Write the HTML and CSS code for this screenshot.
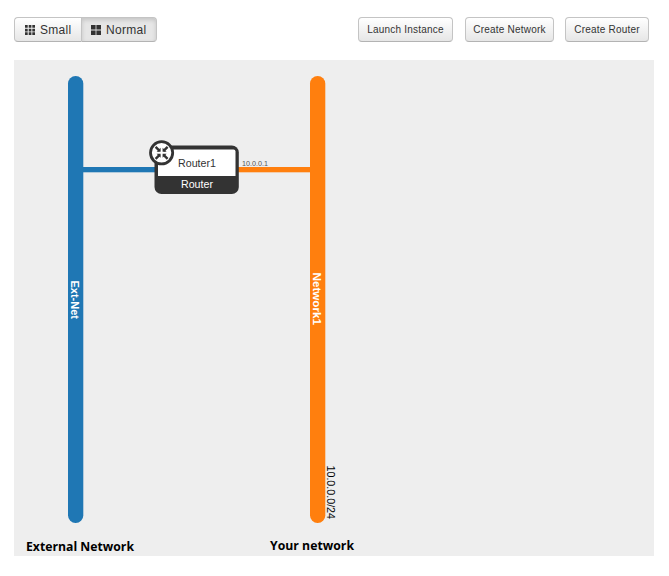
FILE: index.html
```
<!DOCTYPE html>
<html lang="en">
<head>
<meta charset="utf-8">
<title>Network Topology</title>
<link rel="stylesheet" href="styles.css">
</head>
<body>
<header class="toolbar">
  <div class="toggle">
    <button class="btn toggle-btn">
      <svg class="icon" width="10" height="10" viewBox="0 0 10 10"><path d="M0 0h2.7v2.7H0zM3.7 0h2.7v2.7H3.7zM7.3 0H10v2.7H7.3zM0 3.7h2.7v2.7H0zM3.7 3.7h2.7v2.7H3.7zM7.3 3.7H10v2.7H7.3zM0 7.3h2.7V10H0zM3.7 7.3h2.7V10H3.7zM7.3 7.3H10V10H7.3z"/></svg>
      <span>Small</span>
    </button>
    <button class="btn toggle-btn active">
      <svg class="icon" width="10" height="10" viewBox="0 0 10 10"><path d="M0 0h4.6v4.4H0zM5.4 0H10v4.4H5.4zM0 5.4h4.6V10H0zM5.4 5.4H10V10H5.4z"/></svg>
      <span>Normal</span>
    </button>
  </div>
  <div class="actions">
    <button class="btn launch">Launch Instance</button>
    <button class="btn network">Create Network</button>
    <button class="btn router">Create Router</button>
  </div>
</header>
<main class="canvas">
  <svg class="topology" width="640" height="496" viewBox="0 0 640 496">
    <rect class="ext" x="54" y="16" width="15.3" height="447" rx="7.6"/>
    <rect class="own" x="296" y="16" width="15.3" height="447" rx="7.6"/>
    <rect class="ext" x="68" y="107" width="75" height="5.3"/>
    <rect class="own" x="222" y="107" width="75" height="5.3"/>
    <text class="net-name" transform="translate(57 220.5) rotate(90)" textLength="38.5" lengthAdjust="spacingAndGlyphs">Ext-Net</text>
    <text class="net-name" transform="translate(299 212.5) rotate(90)" textLength="52.5" lengthAdjust="spacingAndGlyphs">Network1</text>
    <text class="cidr" transform="translate(313 405.5) rotate(90)" textLength="53.5" lengthAdjust="spacingAndGlyphs">10.0.0.0/24</text>
    <text class="ip" x="228" y="106" textLength="26" lengthAdjust="spacingAndGlyphs">10.0.0.1</text>
    <g class="device">
      <rect class="frame" x="140.5" y="85.5" width="84.3" height="48.5" rx="7"/>
      <path class="face" d="M144 89.5h75.5q2 0 2 2V116H144z"/>
      <text class="device-name" x="164" y="107" textLength="38" lengthAdjust="spacingAndGlyphs">Router1</text>
      <text class="device-type" x="167" y="128" textLength="32" lengthAdjust="spacingAndGlyphs">Router</text>
      <g transform="translate(147.6 92.8)">
        <circle class="badge" r="11.1"/>
        <path class="arrows" d="M-6-6L-2-2M6-6L2-2M-6 6L-2 2M6 6L2 2"/>
        <path class="heads" d="M-1-1v-4L-5-1zM1-1v-4L5-1zM-1 1v4L-5 1zM1 1v4L5 1z"/>
      </g>
    </g>
    <text class="caption" x="12" y="491" textLength="108" lengthAdjust="spacingAndGlyphs">External Network</text>
    <text class="caption" x="256" y="490" textLength="84" lengthAdjust="spacingAndGlyphs">Your network</text>
  </svg>
</main>
</body>
</html>
```
FILE: styles.css
```
body {
  margin: 0;
  background: #fff;
  font-family: "Liberation Sans", Arial, sans-serif;
}

.toolbar {
  display: flex;
  justify-content: space-between;
  padding: 17px 20px 18px 14px;
}

.toggle,
.actions {
  display: flex;
}

.btn {
  box-sizing: border-box;
  height: 25px;
  padding: 0;
  border: 1px solid #c4c4c4;
  border-bottom-color: #b3b3b3;
  border-radius: 4px;
  background: linear-gradient(#fff, #e6e6e6);
  color: #333;
  font-family: inherit;
  font-size: 10px;
  letter-spacing: 0.2px;
  white-space: nowrap;
}

.toggle-btn {
  display: flex;
  align-items: center;
  width: 67px;
  gap: 5px;
  padding-left: 10px;
  border-right: 0;
  border-radius: 4px 0 0 4px;
  font-size: 12px;
  letter-spacing: 0.3px;
}

.toggle-btn.active {
  width: 76px;
  padding-left: 9px;
  border-right: 1px solid #c4c4c4;
  border-left-color: #c4c4c4;
  border-radius: 0 4px 4px 0;
  background: #e6e6e6;
  box-shadow: inset 0 2px 4px rgba(0, 0, 0, 0.15);
}

.icon {
  flex: none;
  fill: #333;
}

.launch {
  width: 95px;
}

.network {
  width: 89px;
  margin: 0 11px 0 12px;
}

.router {
  width: 84px;
}

.canvas {
  width: 640px;
  height: 496px;
  margin-left: 14px;
  background: #eee;
}

.topology {
  display: block;
}

.ext {
  fill: #1f77b4;
}

.own {
  fill: #ff7f0e;
}

.net-name {
  fill: #fff;
  font-size: 10px;
  font-weight: bold;
}

.cidr {
  fill: #000;
  font-size: 10px;
}

.ip {
  fill: #555;
  font-size: 8px;
}

.frame {
  fill: #333;
}

.face {
  fill: #fff;
}

.device-name {
  fill: #333;
  font-size: 11px;
}

.device-type {
  fill: #fff;
  font-size: 11px;
}

.badge {
  fill: #fff;
  stroke: #333;
  stroke-width: 2.8;
}

.arrows {
  stroke: #333;
  stroke-width: 2.4;
}

.heads {
  fill: #333;
}

.caption {
  fill: #000;
  font-family: "Open Sans", sans-serif;
  font-size: 13px;
  font-weight: bold;
}
```
